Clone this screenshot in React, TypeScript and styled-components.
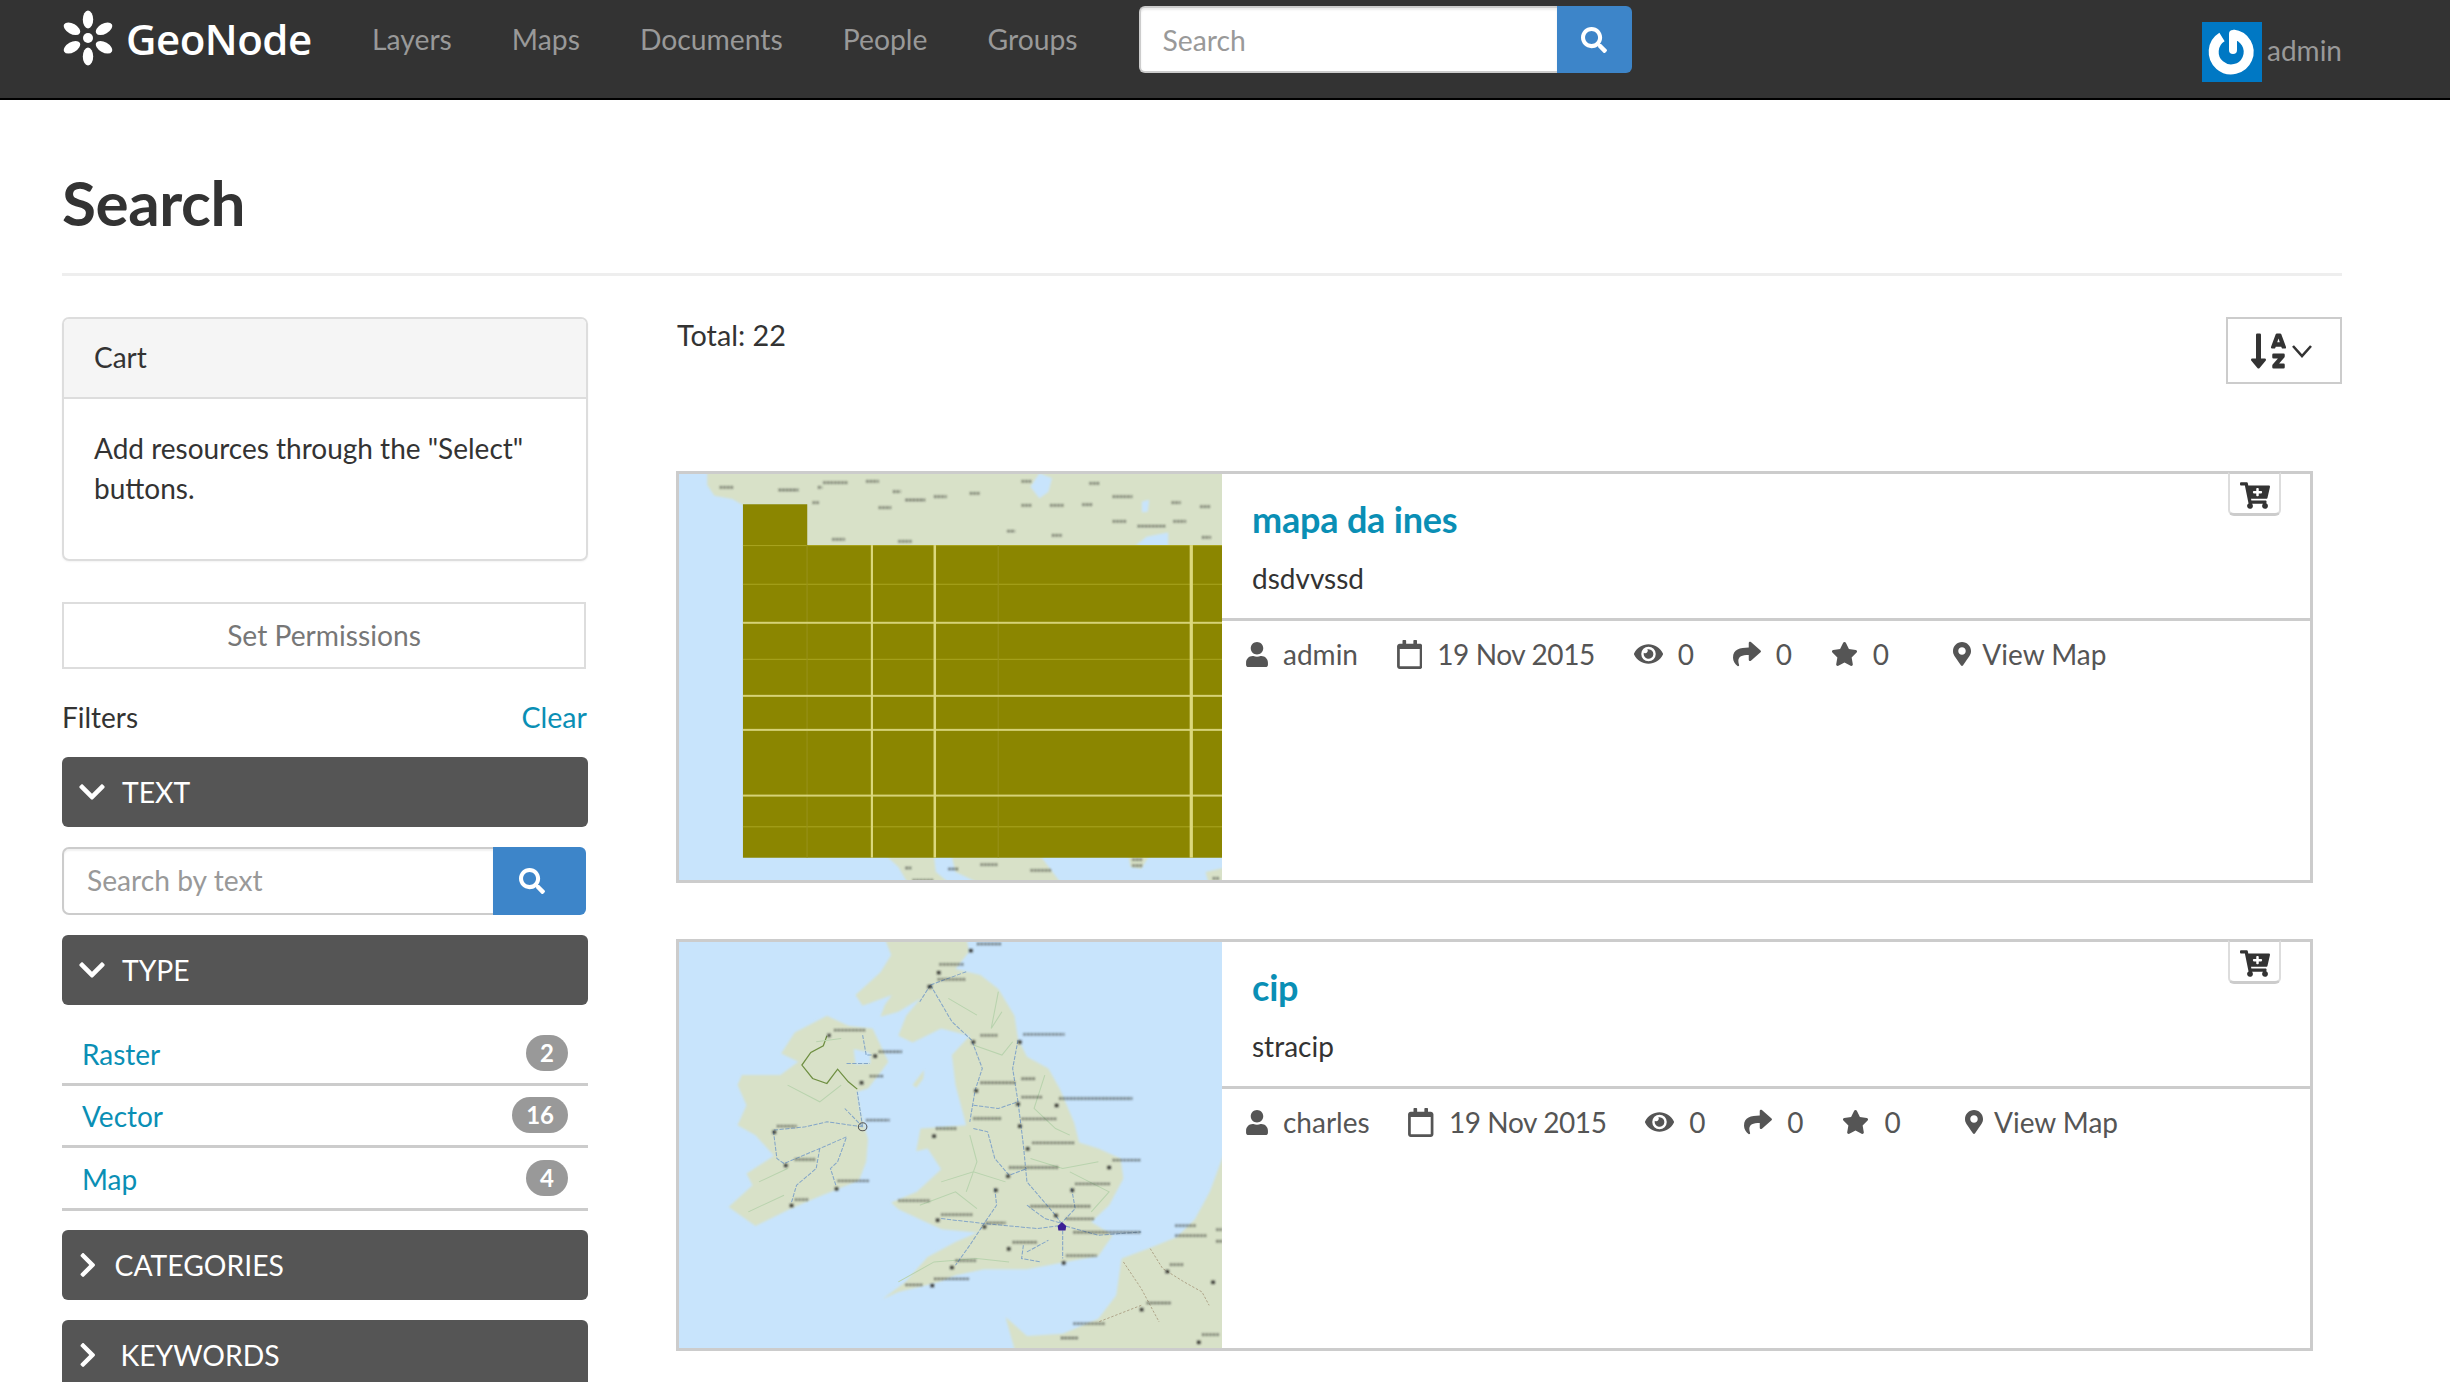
import React from "react";
import styled, { createGlobalStyle } from "styled-components";
import {
  FaSearch, FaUser, FaRegCalendar, FaEye, FaShare, FaStar, FaMapMarkerAlt,
  FaCartPlus, FaChevronDown, FaChevronRight, FaSortAlphaDown,
} from "react-icons/fa";

const Global = createGlobalStyle`
  html, body { margin: 0; padding: 0; height: 100%; overflow: hidden; background: #fff; }
  * { box-sizing: border-box; }
  body { font-family: Lato, "Liberation Sans", sans-serif; font-size: 28px; color: #333; }
  input::placeholder { color: #999; opacity: 1; }
`;

const Navbar = styled.header`
  height: 100px; background: #333; border-bottom: 2px solid #000;
  display: flex; align-items: flex-start; padding: 6px 108px 0 62px;
`;
const Logo = styled.div`
  display: flex; align-items: center; height: 64px; width: 310px; flex: none; gap: 12px;
  color: #fff; font-family: "Open Sans", sans-serif; font-weight: 600; font-size: 42px; letter-spacing: -0.5px;
`;
const NavLinks = styled.nav`
  display: flex; align-items: center; height: 66px; gap: 60px; color: #999; font-size: 28.3px;
`;
const NavSearch = styled.form`
  display: flex; height: 67px; margin-left: 61px; flex: none;
`;
const NavInput = styled.input`
  width: 418px; height: 100%; border: 2.5px solid #ccc; border-right: 0; border-radius: 6px 0 0 6px;
  padding: 0 22px; font: 28.3px Lato, sans-serif; color: #555; background: #fff; box-shadow: inset 0 2px 2px rgba(0,0,0,.08); outline: 0;
`;
const SearchButton = styled.button<{ $w: number; $shift: number }>`
  width: ${p => p.$w}px; height: 100%; border: 0; border-radius: 0 6px 6px 0; background: #3d85c9; color: #fff;
  display: flex; align-items: center; justify-content: center; padding: 0 ${p => p.$shift}px 0 0; font-size: 26px;
`;
const UserBox = styled.div`
  margin-left: auto; margin-top: 16px; display: flex; gap: 5px; color: #999; font-size: 28px; line-height: 56px;
`;
const Avatar = styled.svg`
  width: 60px; height: 60px; display: block; flex: none;
`;

const Page = styled.main`
  padding: 0 108px 0 62px;
`;
const Title = styled.h1`
  margin: 0; height: 176px; padding-top: 68px; border-bottom: 3px solid #eee;
  font-size: 62px; font-weight: 700; line-height: 68px; color: #333; letter-spacing: -0.4px;
`;
const Columns = styled.div`
  display: grid; grid-template-columns: 526px 1640px; column-gap: 88px; margin-top: 41px;
`;
const Sidebar = styled.aside`
  display: flex; flex-direction: column;
`;
const CartPanel = styled.section`
  height: 244px; border: 2.5px solid #ddd; border-radius: 7px; box-shadow: 0 1px 2px rgba(0,0,0,.05); overflow: hidden;
`;
const CartHead = styled.div`
  height: 80px; background: #f5f5f5; border-bottom: 2.5px solid #ddd; padding: 0 30px; line-height: 76px;
`;
const CartBody = styled.p`
  margin: 0; padding: 29px 30px 0; line-height: 40px;
`;
const PermButton = styled.button`
  margin-top: 41px; width: 524px; height: 67px; background: #fff; border: 2.5px solid #ddd; color: #777;
  font: 28.2px Lato, sans-serif; padding: 0 0 2px;
`;
const FilterHead = styled.div`
  display: flex; justify-content: space-between; margin-top: 28px; line-height: 40px; padding-right: 1px;
`;
const Link = styled.a`
  color: #0a8fb5;
`;
const ClearLink = styled(Link)`
  font-size: 28.6px;
`;
const Bar = styled.div<{ $gap: number; $mt: number }>`
  height: 70px; margin-top: ${p => p.$mt}px; background: #555; color: #fff; border-radius: 6px;
  display: flex; align-items: center; padding-left: 17px; gap: ${p => p.$gap}px; flex: none; font-size: 28.3px;
`;
const OpenChevron = styled(FaChevronDown)`
  width: 26px; height: 30px; flex: none;
`;
const ClosedChevron = styled(FaChevronRight)`
  width: 17.5px; height: 28px; flex: none;
`;
const TextSearch = styled.div`
  display: flex; height: 68px; width: 524px; margin-top: 20px;
`;
const TextInput = styled.input`
  flex: 1; min-width: 0; height: 100%; border: 2.5px solid #ccc; border-right: 0; border-radius: 7px 0 0 7px;
  padding: 0 0 2px 23px; font: 28.2px Lato, sans-serif; box-shadow: inset 0 2px 2px rgba(0,0,0,.06); outline: 0;
`;
const TypeList = styled.ul`
  list-style: none; margin: 18px 0 0; padding: 0;
`;
const TypeRow = styled.li`
  height: 62.5px; border-bottom: 3px solid #ccc; display: flex; align-items: center; justify-content: space-between;
  padding: 2px 20px 0 20px;
`;
const Badge = styled.span`
  background: #999; color: #fff; font-weight: 700; font-size: 24px; line-height: 36px; height: 36px; border-radius: 18px;
  padding: 0 14px; margin-top: -2px;
`;

const Results = styled.section`
  display: flex; flex-direction: column;
`;
const ResultHead = styled.div`
  display: flex; justify-content: space-between; height: 154px; margin-left: 1px;
`;
const Total = styled.div`
  line-height: 40px; margin-top: -2px; font-size: 28.8px;
`;
const SortButton = styled.button`
  width: 116px; height: 67px; border: 2.5px solid #ccc; background: #fff; color: #333; padding: 0 0 0 23px; margin-right: -26px;
  display: flex; align-items: center; gap: 5px;
`;
const SortIcon = styled(FaSortAlphaDown)`
  width: 35px; height: 40px; flex: none;
`;
const SortChevron = styled.svg`
  width: 22px; height: 14px; flex: none;
`;
const Card = styled.article`
  position: relative; display: flex; width: 1637px; height: 412px; border: 3px solid #ccc; margin-bottom: 56px; background: #fff;
`;
const Thumb = styled.svg`
  display: block; width: 543px; height: 406px; flex: none;
`;
const CardBody = styled.div`
  flex: 1; min-width: 0; display: flex; flex-direction: column;
`;
const CardTop = styled.div`
  height: 147px; border-bottom: 3px solid #ccc; padding: 23px 0 0 30px;
`;
const CardTitle = styled.a`
  display: block; color: #0a8fb5; font-weight: 700; font-size: 36px; line-height: 44px; letter-spacing: -0.2px;
`;
const CardAbstract = styled.p`
  margin: 17px 0 0; line-height: 40px; color: #333;
`;
const Meta = styled.ul`
  list-style: none; margin: 0; padding: 13px 0 0 24px; display: flex; gap: 38.8px; color: #555; line-height: 40px;
`;
const MetaItem = styled.li<{ $push?: boolean; $w: number; $h: number; $gap?: number }>`
  display: flex; align-items: center; gap: ${p => p.$gap ?? 15}px; margin-left: ${p => (p.$push ? 25.5 : 0)}px;
  svg { width: ${p => p.$w}px; height: ${p => p.$h}px; flex: none; }
`;
const DateText = styled.span`
  letter-spacing: -0.4px;
`;
const CartButton = styled.button`
  position: absolute; top: -2px; right: 29px; width: 53px; height: 44px; background: #fff; color: #333;
  border: 2px solid #ddd; border-bottom: 3px solid #ccc; border-top-color: #ccc; border-radius: 0 0 6px 6px; padding: 3px 0 0;
  display: flex; align-items: center; justify-content: center;
  svg { width: 30px; height: 27px; }
`;

const flowerAngles = [0, 60, 120, 180, 240, 300];
const Flower = () => (
  <svg width="52" height="56" viewBox="-26 -28 52 56" style={{ flex: "none" }}>
    <circle r="5" fill="#fff" />
    {flowerAngles.map(a => (
      <ellipse key={a} cx="0" cy="-18.5" rx="5.2" ry="9" fill="#fff" transform={`rotate(${a})`} />
    ))}
  </svg>
);

type Mark = [number, number, number];
const Marks = ({ items, id }: { items: Mark[]; id: string }) => (
  <g filter={`url(#${id})`} stroke="#33352f" strokeWidth="7" strokeDasharray="7 3" opacity="0.72">
    {items.map(([x, y, w], i) => (
      <line key={i} x1={x} y1={y + 3} x2={x + w} y2={y + 3} />
    ))}
  </g>
);
const BlurDef = ({ id, soft }: { id: string; soft: string }) => (
  <defs>
    <filter id={id} x="-10%" y="-10%" width="120%" height="120%">
      <feGaussianBlur stdDeviation="2.4" />
    </filter>
    <filter id={soft} x="-5%" y="-5%" width="110%" height="110%">
      <feGaussianBlur stdDeviation="3" />
    </filter>
  </defs>
);

const OLIVE = "#8b8600";
const vBright: [number, number][] = [[566, 6], [742, 7], [1460, 9]];
const vFaint = [385, 920];
const hBright = [493, 712, 814, 1011];
const hFaint = [262, 378, 603, 1105];
const northMarks: Mark[] = [
  [140, 84, 40], [305, 92, 55], [415, 84, 12], [430, 70, 70], [550, 66, 35], [625, 97, 22], [660, 122, 55], [740, 112, 35],
  [840, 102, 30], [985, 66, 30], [1175, 72, 30], [1240, 112, 55], [585, 145, 35], [985, 138, 30], [1065, 138, 40], [1155, 136, 30],
  [1405, 130, 25], [1485, 142, 30], [1240, 186, 40], [1310, 200, 80], [1410, 186, 35], [945, 215, 22], [1070, 228, 30],
  [1490, 234, 25], [455, 240, 35], [400, 130, 20], [640, 246, 40], [660, 1225, 16], [780, 1228, 30], [870, 1215, 50], [1010, 1232, 60],
  [1295, 1200, 30], [1295, 1218, 30], [680, 1262, 60], [1520, 1256, 20],
];

const MapAmerica = () => (
  <Thumb viewBox="26 47 1520 1217" preserveAspectRatio="none">
    <BlurDef id="blurA" soft="softA" />
    <rect x="26" y="47" width="1520" height="1217" fill="#c8e4fc" />
    <g filter="url(#softA)">
      <path fill="#d8e1c8" d="M105 30 L1560 30 L1560 265 L380 265 L380 140 L205 140 L175 122 L125 112 L105 80 Z" />
      <path fill="#c8e4fc" d="M1010 85 L1035 45 L1070 60 L1060 100 L1035 120 Z M1322 130 L1342 124 L1338 160 L1322 162 Z M1335 235 L1395 222 L1395 265 L1300 265 Z" />
      <path fill="#d8e1c8" d="M610 1195 L740 1195 L745 1240 L790 1280 L670 1280 L640 1225 Z M790 1195 L1040 1195 L1100 1280 L970 1280 L880 1280 L800 1240 Z M1285 1195 L1340 1195 L1320 1230 L1290 1225 Z M1500 1240 L1560 1225 L1560 1280 L1510 1280 Z" />
    </g>
    <Marks items={northMarks} id="blurA" />
    <path fill={OLIVE} d="M205 138 H385 V260 H1546 V1197 H205 Z" />
    {hFaint.map(y => <rect key={y} x="205" y={y - 2} width="1341" height="3" fill="#a9a520" />)}
    {vFaint.map(x => <rect key={x} x={x - 2} y="260" width="3" height="937" fill="#97921a" />)}
    {hBright.map(y => <rect key={y} x="205" y={y - 3} width="1341" height="6" fill="#d6d277" />)}
    {vBright.map(([x, w]) => <rect key={x} x={x - w / 2} y="260" width={w} height="937" fill="#dcd87c" />)}
  </Thumb>
);

const ukRoads = [
  "M730 170 L790 280 L845 335 L875 420 L855 485 L840 580 M975 335 L960 420 L975 520 L990 650 L1000 760 L1080 860 L1100 890",
  "M850 530 L920 540 L975 520 M850 600 L890 610 L910 690 L950 740 L1000 720 M910 780 L915 830 L880 885 L840 950 L800 1010",
  "M760 870 L880 885 L1030 900 L1100 890 L1200 920 L1320 910 M1100 890 L1100 990 M1000 970 L1060 935 M990 950 L985 990 L1040 1000",
  "M1125 780 L1135 840 L1100 880 M1000 830 L1050 870 L1100 885 M730 170 L700 220 M730 170 L830 130",
  "M540 595 L440 580 L380 595 L290 605 L300 690 L320 705 L420 660 L495 625 L470 700 L450 720 L465 770 M420 660 L410 720 L355 770 L340 825",
  "M540 595 L525 490 M540 595 L490 540 M540 320 L550 380 L570 380 M495 405 L560 405",
];
const ukMinor = [
  "M840 620 L860 700 L830 790 M760 760 L850 730 L940 760 M1010 690 L1100 720 L1200 700 M1050 440 L1020 540 L1080 600 L1120 620",
  "M1120 730 L1230 790 L1180 850 M930 250 L900 300 L920 190 M780 210 L860 260 M330 470 L420 520 L480 470 M250 760 L330 720 M220 850 L320 800",
  "M640 1060 L740 1000 L860 990 L950 1000 M700 830 L800 790 L860 840 M850 350 L930 380 L960 340 M410 340 L480 330",
];
const ukMarks: Mark[] = [
  [860, 44, 70], [755, 105, 70], [750, 150, 80], [990, 315, 115], [870, 318, 50], [585, 367, 65], [460, 302, 90], [560, 440, 40],
  [870, 460, 100], [985, 448, 40], [985, 503, 60], [1090, 507, 205], [850, 567, 80], [985, 568, 100], [745, 597, 60], [1015, 640, 120],
  [300, 590, 55], [550, 572, 65], [950, 714, 140], [1240, 692, 80], [470, 754, 90], [350, 690, 60], [1135, 763, 100], [640, 813, 90],
  [760, 855, 90], [885, 880, 55], [1010, 830, 170], [1110, 868, 80], [1130, 908, 190], [960, 938, 70], [1110, 978, 85], [800, 993, 60],
  [740, 1048, 100], [660, 1066, 50], [1415, 888, 60], [1415, 918, 90], [1530, 900, 16], [1530, 935, 16], [1400, 1005, 40], [1335, 1120, 70],
  [1130, 1182, 90], [1095, 1225, 50], [1490, 1215, 50], [350, 810, 40],
];
const ukCities: Mark[] = [
  [838, 62, 10], [748, 128, 10], [722, 170, 12], [442, 316, 8], [570, 378, 10], [532, 458, 10], [845, 336, 10], [975, 336, 10],
  [853, 482, 10], [970, 522, 10], [1078, 526, 10], [975, 588, 10], [735, 618, 10], [997, 656, 10], [288, 606, 10], [320, 706, 10],
  [462, 776, 10], [336, 826, 10], [908, 780, 10], [942, 738, 10], [1122, 780, 10], [1076, 856, 10], [745, 870, 10], [876, 890, 10],
  [944, 956, 10], [1098, 998, 10], [785, 1012, 10], [730, 1066, 10], [1225, 712, 10], [1316, 1138, 10], [1388, 1024, 10], [1516, 1056, 10], [1476, 1236, 10],
];

const MapBritain = () => (
  <Thumb viewBox="26 41 1520 1217" preserveAspectRatio="none">
    <BlurDef id="blurB" soft="softB" />
    <rect x="26" y="41" width="1520" height="1217" fill="#c8e4fc" />
    <g fill="#d8e1c8" filter="url(#softB)">
      <path d="M440 262 L500 292 L568 300 L612 400 L590 432 L555 480 L525 490 L532 545 L555 632 L550 700 L530 755 L462 785 L400 812 L340 840 L240 892 L165 835 L232 770 L215 735 L292 682 L240 620 L190 590 L215 530 L190 470 L202 440 L310 440 L360 400 L312 375 L350 312 Z" />
      <path d="M600 25 L830 25 L838 70 L800 122 L870 140 L920 182 L965 262 L975 332 L1000 385 L1060 420 L1092 482 L1132 582 L1146 642 L1200 660 L1262 690 L1270 750 L1230 830 L1180 880 L1240 920 L1200 982 L1100 1002 L1000 1022 L880 1022 L800 1040 L750 1062 L640 1090 L595 1112 L660 1060 L722 985 L800 940 L862 912 L762 902 L720 882 L640 842 L620 822 L692 790 L760 722 L722 660 L690 668 L702 600 L830 590 L800 470 L790 380 L840 322 L760 300 L680 342 L640 322 L662 262 L702 210 L640 250 L590 265 L602 230 L622 200 L540 232 L520 200 L590 132 L620 80 Z" />
      <path d="M680 470 L712 425 L710 450 L690 478 Z" />
      <path d="M1560 650 L1512 790 L1470 872 L1420 925 L1340 960 L1265 990 L1250 1100 L1200 1170 L1100 1215 L1000 1222 L940 1165 L970 1280 L1560 1280 Z" />
    </g>
    <path d="M515 362 L560 372 L562 405 L520 408 Z" fill="#c8e4fc" filter="url(#softB)" />
    <path d="M440 322 L430 352 L395 372 L370 410 L400 450 L440 465 L470 422 L500 460 L525 482" fill="none" stroke="#6f8f42" strokeWidth="3.5" />
    {ukMinor.map((d, i) => (
      <path key={i} d={d} fill="none" stroke="#b9d3ae" strokeWidth="3" />
    ))}
    <path d="M1345 960 L1380 1020 L1440 1060 L1490 1090 L1510 1130 M1270 1000 L1320 1080 L1370 1180 M1320 1130 L1200 1180" fill="none" stroke="#a89a7e" strokeWidth="2.5" strokeDasharray="7 5" />
    {ukRoads.map((d, i) => (
      <path key={i} d={d} fill="none" stroke="#84a6c8" strokeWidth="3" strokeDasharray="12 4" />
    ))}
    <Marks items={ukMarks} id="blurB" />
    <g filter="url(#blurB)" fill="#2d2f2c">
      {ukCities.map(([x, y, w], i) => <rect key={i} x={x} y={y} width={w} height="10" />)}
    </g>
    <circle cx="540" cy="595" r="12" fill="none" stroke="#555" strokeWidth="3" />
    <path d="M1098 880 L1110 892 L1108 906 L1088 906 L1086 892 Z" fill="#3b1f96" />
  </Thumb>
);

const ResultCard = ({ map, title, abstract, owner }: { map: React.ReactNode; title: string; abstract: string; owner: string }) => (
  <Card>
    {map}
    <CardBody>
      <CardTop>
        <CardTitle>{title}</CardTitle>
        <CardAbstract>{abstract}</CardAbstract>
      </CardTop>
      <Meta>
        <MetaItem $w={22} $h={25}><FaUser />{owner}</MetaItem>
        <MetaItem $w={25.5} $h={29}><FaRegCalendar /><DateText>19 Nov 2015</DateText></MetaItem>
        <MetaItem $w={29} $h={26}><FaEye />0</MetaItem>
        <MetaItem $w={28} $h={28}><FaShare />0</MetaItem>
        <MetaItem $w={27} $h={24}><FaStar />0</MetaItem>
        <MetaItem $push $w={18} $h={24} $gap={11}><FaMapMarkerAlt />View Map</MetaItem>
      </Meta>
    </CardBody>
    <CartButton aria-label="add to cart"><FaCartPlus /></CartButton>
  </Card>
);

const types: [string, number][] = [["Raster", 2], ["Vector", 16], ["Map", 4]];

export default function App() {
  return (
    <>
      <Global />
      <Navbar>
        <Logo><Flower />GeoNode</Logo>
        <NavLinks>
          <span>Layers</span><span>Maps</span><span>Documents</span><span>People</span><span>Groups</span>
        </NavLinks>
        <NavSearch>
          <NavInput placeholder="Search" />
          <SearchButton $w={75} $shift={0} type="button" aria-label="search"><FaSearch /></SearchButton>
        </NavSearch>
        <UserBox>
          <Avatar viewBox="0 0 60 60">
            <rect width="60" height="60" fill="#0078c4" />
            <path d="M20 15 A17.5 17.5 0 1 0 31 12.5" fill="none" stroke="#fff" strokeWidth="10" />
            <path d="M31 12 V28" fill="none" stroke="#fff" strokeWidth="8" strokeLinecap="round" />
          </Avatar>
          admin
        </UserBox>
      </Navbar>
      <Page>
        <Title>Search</Title>
        <Columns>
          <Sidebar>
            <CartPanel>
              <CartHead>Cart</CartHead>
              <CartBody>Add resources through the "Select" buttons.</CartBody>
            </CartPanel>
            <PermButton>Set Permissions</PermButton>
            <FilterHead><span>Filters</span><ClearLink>Clear</ClearLink></FilterHead>
            <Bar $gap={17} $mt={20}><OpenChevron />TEXT</Bar>
            <TextSearch>
              <TextInput placeholder="Search by text" />
              <SearchButton $w={93} $shift={15} type="button" aria-label="search text"><FaSearch /></SearchButton>
            </TextSearch>
            <Bar $gap={17} $mt={20}><OpenChevron />TYPE</Bar>
            <TypeList>
              {types.map(([name, n]) => (
                <TypeRow key={name}><Link>{name}</Link><Badge>{n}</Badge></TypeRow>
              ))}
            </TypeList>
            <Bar $gap={18} $mt={19}><ClosedChevron />CATEGORIES</Bar>
            <Bar $gap={24} $mt={20}><ClosedChevron />KEYWORDS</Bar>
          </Sidebar>
          <Results>
            <ResultHead>
              <Total>Total: 22</Total>
              <SortButton aria-label="sort">
                <SortIcon />
                <SortChevron viewBox="0 0 22 14">
                  <path d="M2 2 L11 12 L20 2" fill="none" stroke="#333" strokeWidth="2.6" />
                </SortChevron>
              </SortButton>
            </ResultHead>
            <ResultCard map={<MapAmerica />} title="mapa da ines" abstract="dsdvvssd" owner="admin" />
            <ResultCard map={<MapBritain />} title="cip" abstract="stracip" owner="charles" />
          </Results>
        </Columns>
      </Page>
    </>
  );
}
